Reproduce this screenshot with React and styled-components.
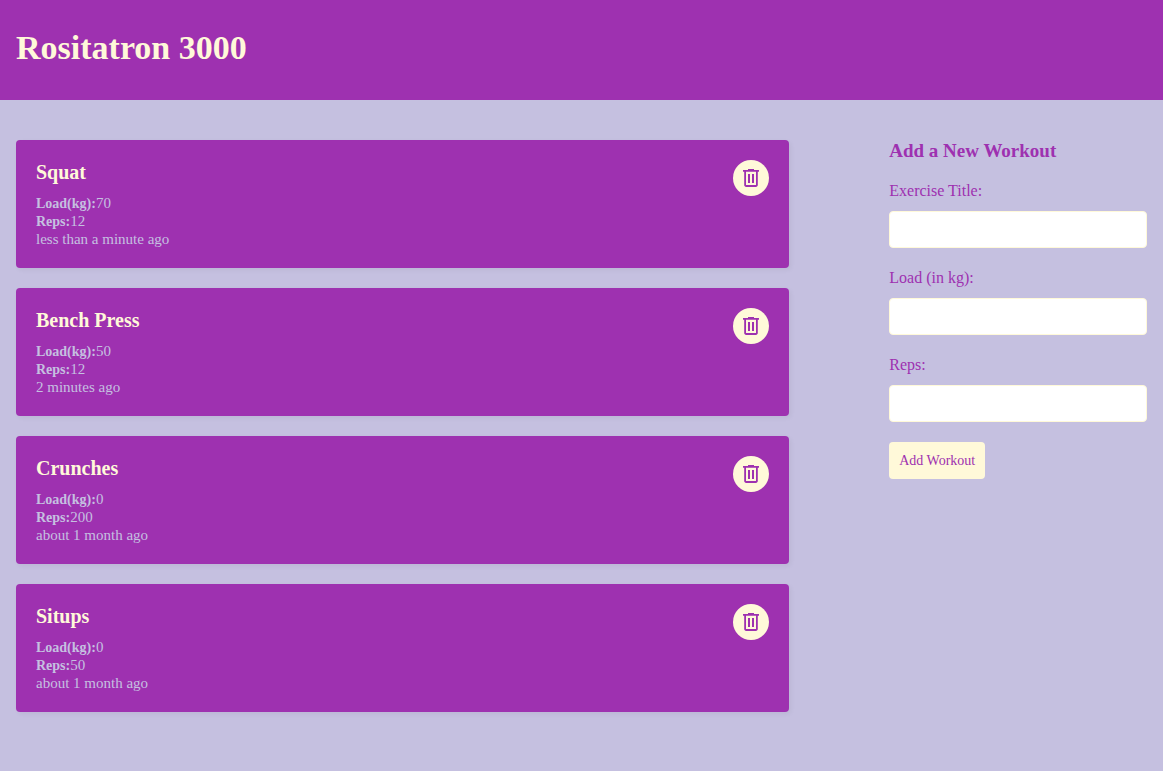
import React, { useState } from "react";
import styled, { createGlobalStyle, ThemeProvider } from "styled-components";

const theme = {
  primary: "#9e31b0",
  lilac: "#c5c0e0",
  cream: "#fff9d9",
};

const GlobalStyle = createGlobalStyle`
  *, *::before, *::after {
    box-sizing: border-box;
  }
  body {
    margin: 0;
    background: ${theme.lilac};
    font-family: "Liberation Serif", serif;
  }
  h1, h2, h3, p {
    margin: 0;
  }
`;

const Header = styled.header`
  padding: 28px 16px 32px;
  background: ${({ theme }) => theme.primary};
`;

const Brand = styled.h1`
  font-size: 34px;
  line-height: 40px;

  a {
    color: ${({ theme }) => theme.cream};
    text-decoration: none;
  }
`;

const Home = styled.main`
  display: grid;
  grid-template-columns: 3fr 1fr;
  gap: 100px;
  align-items: start;
  padding: 40px 16px;
`;

const WorkoutList = styled.section`
  display: grid;
  gap: 20px;
  padding-bottom: 16px;
`;

const Card = styled.article`
  display: flex;
  justify-content: space-between;
  align-items: flex-start;
  padding: 20px;
  border-radius: 4px;
  background: ${({ theme }) => theme.primary};
  box-shadow: 2px 2px 5px rgba(0, 0, 0, 0.05);
`;

const CardTitle = styled.h2`
  margin-bottom: 10px;
  color: ${({ theme }) => theme.cream};
  font-size: 20px;
  line-height: 24px;
`;

const Detail = styled.p`
  color: ${({ theme }) => theme.lilac};
  font-size: 15px;
  line-height: 18px;

  strong {
    font-size: 14px;
    line-height: 1;
  }
`;

const DeleteButton = styled.button`
  display: flex;
  padding: 6px;
  border: 0;
  border-radius: 50%;
  background: ${({ theme }) => theme.cream};
  color: ${({ theme }) => theme.primary};
  cursor: pointer;
`;

const Form = styled.form`
  display: flex;
  flex-direction: column;
  align-items: flex-start;
  gap: 20px;
`;

const FormTitle = styled.h2`
  color: ${({ theme }) => theme.primary};
  font-size: 19px;
  line-height: 21px;
`;

const Field = styled.div`
  display: flex;
  flex-direction: column;
  gap: 10px;
  width: 100%;
`;

const Label = styled.label`
  color: ${({ theme }) => theme.primary};
  font-size: 16px;
  line-height: 20px;
`;

const Input = styled.input`
  width: 100%;
  height: 37px;
  padding: 10px;
  border: 1px solid ${({ theme }) => theme.cream};
  border-radius: 4px;
  background: #fff;
  font: inherit;
`;

const SubmitButton = styled.button`
  padding: 10px;
  border: 0;
  border-radius: 4px;
  background: ${({ theme }) => theme.cream};
  color: ${({ theme }) => theme.primary};
  font-family: inherit;
  font-size: 14px;
  line-height: 17px;
  cursor: pointer;
`;

const TrashIcon = () => (
  <svg width="24" height="24" viewBox="0 0 24 24" fill="currentColor" aria-hidden="true">
    <path d="M7.1 20.9q-.8 0-1.35-.55T5.2 19V5.8H4V4h5V3h6v1h5v1.8h-1.2V19q0 .8-.55 1.35t-1.35.55ZM17 5.8H7V18.8q0 .2.2.2h9.6q.2 0 .2-.2ZM9 17h2V8H9Zm4 0h2V8h-2Z" />
  </svg>
);

const initialWorkouts = [
  { id: 1, title: "Squat", load: 70, reps: 12, added: "less than a minute ago" },
  { id: 2, title: "Bench Press", load: 50, reps: 12, added: "2 minutes ago" },
  { id: 3, title: "Crunches", load: 0, reps: 200, added: "about 1 month ago" },
  { id: 4, title: "Situps", load: 0, reps: 50, added: "about 1 month ago" },
];

const fields = [
  { name: "title", label: "Exercise Title:", type: "text" },
  { name: "load", label: "Load (in kg):", type: "number" },
  { name: "reps", label: "Reps:", type: "number" },
];

function WorkoutCard({ workout, onDelete }) {
  return (
    <Card>
      <div>
        <CardTitle>{workout.title}</CardTitle>
        <Detail><strong>Load(kg):</strong>{workout.load}</Detail>
        <Detail><strong>Reps:</strong>{workout.reps}</Detail>
        <Detail>{workout.added}</Detail>
      </div>
      <DeleteButton type="button" aria-label={`Delete ${workout.title}`} onClick={onDelete}>
        <TrashIcon />
      </DeleteButton>
    </Card>
  );
}

export default function App() {
  const [workouts, setWorkouts] = useState(initialWorkouts);

  const addWorkout = (event) => {
    event.preventDefault();
    const { title, load, reps } = Object.fromEntries(new FormData(event.currentTarget));
    if (!title || !load || !reps) return;
    setWorkouts([{ id: Date.now(), title, load, reps, added: "less than a minute ago" }, ...workouts]);
    event.currentTarget.reset();
  };

  return (
    <ThemeProvider theme={theme}>
      <GlobalStyle />
      <Header>
        <Brand><a href="/">Rositatron 3000</a></Brand>
      </Header>
      <Home>
        <WorkoutList>
          {workouts.map((workout) => (
            <WorkoutCard
              key={workout.id}
              workout={workout}
              onDelete={() => setWorkouts(workouts.filter((w) => w.id !== workout.id))}
            />
          ))}
        </WorkoutList>
        <Form onSubmit={addWorkout}>
          <FormTitle>Add a New Workout</FormTitle>
          {fields.map(({ name, label, type }) => (
            <Field key={name}>
              <Label htmlFor={name}>{label}</Label>
              <Input id={name} name={name} type={type} />
            </Field>
          ))}
          <SubmitButton>Add Workout</SubmitButton>
        </Form>
      </Home>
    </ThemeProvider>
  );
}
